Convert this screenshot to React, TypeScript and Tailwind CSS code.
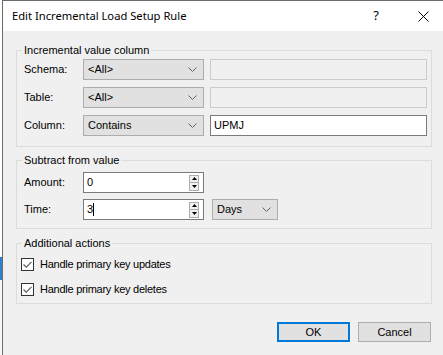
import React from "react"

const ui = "font-['Liberation_Sans',Arial,sans-serif] text-[11px] text-black"

function Chevron() {
  return (
    <svg width="9" height="5" viewBox="0 0 9 5" className="shrink-0">
      <path d="M0.5 0.5 L4.5 4.5 L8.5 0.5" fill="none" stroke="#606060" strokeWidth="1" />
    </svg>
  )
}

function Combo({ value, width }: { value: string; width: string }) {
  return (
    <div className={`${width} h-[21px] flex items-center justify-between pl-[4px] pr-[6px] bg-[#e1e1e1] border border-[#adadad]`}>
      <span>{value}</span>
      <Chevron />
    </div>
  )
}

function Spin() {
  return (
    <div className="flex flex-col w-[10px] h-[16px] border border-[#adadad] bg-[#f0f0f0] mr-[4px]">
      <div className="flex-1 flex items-center justify-center border-b border-[#adadad]">
        <svg width="5" height="3" viewBox="0 0 5 3">
          <path d="M0 3 L2.5 0 L5 3 Z" fill="#000" />
        </svg>
      </div>
      <div className="flex-1 flex items-center justify-center">
        <svg width="5" height="3" viewBox="0 0 5 3">
          <path d="M0 0 L2.5 3 L5 0 Z" fill="#000" />
        </svg>
      </div>
    </div>
  )
}

function NumberBox({ value, caret }: { value: string; caret?: boolean }) {
  return (
    <div className="w-[121px] h-[21px] flex items-center justify-between bg-white border border-[#7a7a7a] pl-[3px]">
      <span className="flex items-center">
        {value}
        {caret && <span className="inline-block w-px h-[13px] bg-black" />}
      </span>
      <Spin />
    </div>
  )
}

function Check({ label }: { label: string }) {
  return (
    <div className="h-[16px] flex items-center gap-[6px] pl-[4px]">
      <div className="w-[13px] h-[13px] border border-[#333] bg-white flex items-center justify-center">
        <svg width="9" height="7" viewBox="0 0 9 7">
          <path d="M0.5 3.5 L3.3 6.2 L8.5 0.8" fill="none" stroke="#5a5a5a" strokeWidth="1.1" />
        </svg>
      </div>
      <span className="tracking-[-0.25px]">{label}</span>
    </div>
  )
}

function Group({ title, className, children }: { title: string; className?: string; children: React.ReactNode }) {
  return (
    <fieldset className={`w-[416px] border border-[#dcdcdc] ${className ?? ""}`}>
      <legend className="ml-[5px] px-[2px] leading-[16px]">{title}</legend>
      {children}
    </fieldset>
  )
}

export default function App() {
  return (
    <div className={`w-[443px] h-[355px] flex overflow-hidden bg-white ${ui}`}>
      {/* bits of whatever sits behind the dialog */}
      <div className="w-[2px] flex flex-col">
        <div className="h-[257px] bg-white" />
        <div className="h-[23px] bg-[#2f7fd3]" />
        <div className="flex-1 bg-[#f7f7f7]" />
      </div>

      <div className="w-[441px] flex flex-col border-l border-t border-[#6b6b6b]">
        <div className="h-[30px] bg-white flex items-center pl-[9px] shrink-0">
          <span className="font-['Noto_Sans',sans-serif] text-[11.2px] text-black flex-1">Edit Incremental Load Setup Rule</span>
          <span className="font-['Noto_Sans',sans-serif] text-[13px] mr-[39px]">?</span>
          <svg width="11" height="11" viewBox="0 0 11 11" className="mr-[14px]">
            <path d="M0.5 0.5 L10.5 10.5 M10.5 0.5 L0.5 10.5" stroke="#000" strokeWidth="1" />
          </svg>
        </div>

        <div className="flex-1 bg-[#f0f0f0] pl-[13px] pt-[11px]">
          <Group title="Incremental value column" className="pb-[10px]">
            <div className="flex flex-col gap-[7px] pt-[1px] pl-[7px]">
              {[
                { label: "Schema:", value: "<All>", text: "", enabled: false },
                { label: "Table:", value: "<All>", text: "", enabled: false },
                { label: "Column:", value: "Contains", text: "UPMJ", enabled: true },
              ].map((row) => (
                <div key={row.label} className="flex items-center">
                  <span className="w-[59px]">{row.label}</span>
                  <Combo value={row.value} width="w-[121px]" />
                  <div
                    className={`ml-[6px] w-[217px] h-[21px] flex items-center pl-[3px] border ${
                      row.enabled ? "bg-white border-[#7a7a7a]" : "bg-[#f0f0f0] border-[#cccccc]"
                    }`}
                  >
                    {row.text}
                  </div>
                </div>
              ))}
            </div>
          </Group>

          <Group title="Subtract from value" className="mt-[5px] pb-[8px]">
            <div className="flex flex-col gap-[6px] pt-[4px] pl-[7px]">
              <div className="flex items-center">
                <span className="w-[59px]">Amount:</span>
                <NumberBox value="0" />
              </div>
              <div className="flex items-center">
                <span className="w-[59px]">Time:</span>
                <NumberBox value="3" caret />
                <div className="ml-[8px]">
                  <Combo value="Days" width="w-[66px]" />
                </div>
              </div>
            </div>
          </Group>

          <Group title="Additional actions" className="mt-[6px] pb-[6px]">
            <div className="flex flex-col gap-[9px] pt-[5px]">
              <Check label="Handle primary key updates" />
              <Check label="Handle primary key deletes" />
            </div>
          </Group>

          <div className="w-[416px] mt-[18px] flex justify-end gap-[8px] pr-[1px]">
            <button className="w-[73px] h-[20px] bg-[#e1e1e1] border-2 border-[#0078d7] flex items-center justify-center">
              OK
            </button>
            <button className="w-[73px] h-[20px] bg-[#e1e1e1] border border-[#adadad] flex items-center justify-center">
              Cancel
            </button>
          </div>
        </div>
      </div>
    </div>
  )
}
